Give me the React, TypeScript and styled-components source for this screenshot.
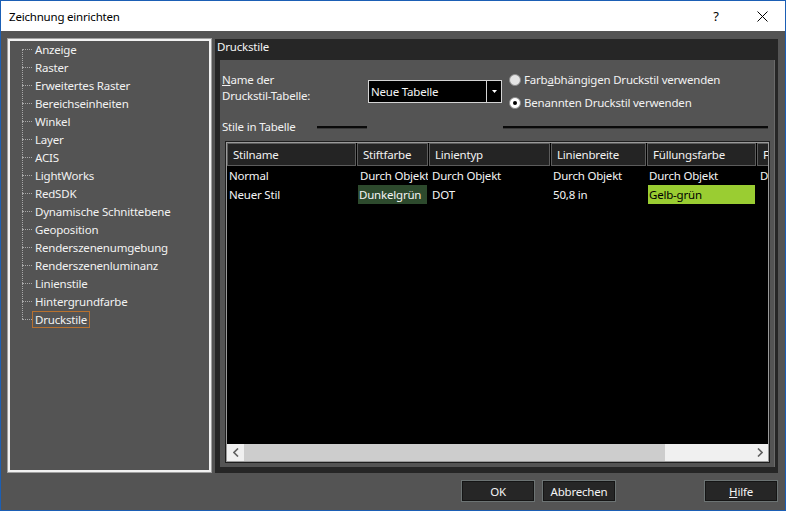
import React from 'react';
import styled, { createGlobalStyle } from 'styled-components';

const GlobalStyle = createGlobalStyle`
  html, body { margin: 0; padding: 0; background: #545454; }
  body { font-family: "Noto Sans", "Segoe UI", sans-serif; font-size: 11.5px; letter-spacing: -0.2px; }
  * { box-sizing: border-box; }
`;

const Window = styled.div`
  width: 786px;
  height: 511px;
  border: 1px solid #1b5fb5;
  display: flex;
  flex-direction: column;
  background: #545454;
  overflow: hidden;
`;

const TitleBar = styled.div`
  height: 30px;
  background: #ffffff;
  display: flex;
  align-items: center;
  flex-shrink: 0;
`;

const TitleText = styled.div`
  flex: 1;
  padding-left: 8px;
  color: #000;
`;

const CaptionButton = styled.div`
  width: 46px;
  height: 30px;
  display: flex;
  align-items: center;
  justify-content: center;
  color: #000;
  font-size: 13px;
`;

const Body = styled.div`
  flex: 1;
  display: flex;
  flex-direction: column;
  padding: 7px 7px 8px 6px;
`;

const MainRow = styled.div`
  display: flex;
  height: 435px;
  gap: 3px;
`;

const TreePanel = styled.div`
  width: 205px;
  height: 435px;
  border: 1px solid #a0a0a0;
  box-shadow: inset 0 0 0 2px #f2f2f2;
  padding: 1px 0 0 14px;
`;

const TreeList = styled.div`
  position: relative;
  &::before {
    content: '';
    position: absolute;
    left: 0;
    top: 9px;
    bottom: 9px;
    border-left: 1px dotted #a8a8a8;
  }
`;

const TreeItem = styled.div`
  height: 18px;
  display: flex;
  align-items: center;
  &::before {
    content: '';
    width: 10px;
    border-top: 1px dotted #a8a8a8;
  }
`;

const TreeLabel = styled.span<{ $selected?: boolean }>`
  color: #f2f2f2;
  border: 1px solid ${(p) => (p.$selected ? '#b8712f' : 'transparent')};
  padding: 0 2px 0 2px;
  line-height: 15px;
  white-space: nowrap;
`;

const RightPanel = styled.div`
  width: 563px;
  height: 434px;
  margin-top: 1px;
  background: #262626;
  display: flex;
  flex-direction: column;
`;

const PanelHeader = styled.div`
  height: 21px;
  padding: 0 0 0 2px;
  color: #f4f4f4;
  line-height: 15px;
  flex-shrink: 0;
`;

const PanelInner = styled.div`
  flex: 1;
  margin: 0 3px 6px 5px;
  background: #545454;
  border-right: 1px solid #6a6a6a;
  display: flex;
  flex-direction: column;
`;

const TopRow = styled.div`
  display: flex;
  align-items: flex-start;
  padding: 8px 0 0 2px;
`;

const NameLabel = styled.div`
  width: 146px;
  margin-top: 4px;
  color: #f2f2f2;
  line-height: 16px;
`;

const ComboBox = styled.div`
  margin-top: 12px;
  width: 134px;
  height: 23px;
  display: flex;
`;

const ComboField = styled.div`
  flex: 1;
  background: #000;
  border: 1px solid #d4d4d4;
  color: #f4f4f4;
  padding-left: 2px;
  display: flex;
  align-items: center;
`;

const ComboButton = styled.div`
  width: 15px;
  background: #000;
  border: 1px solid #d4d4d4;
  border-left: none;
  display: flex;
  align-items: center;
  justify-content: center;
`;

const RadioGroup = styled.div`
  margin-left: 7px;
  display: flex;
  flex-direction: column;
`;

const RadioRow = styled.div`
  height: 23px;
  display: flex;
  align-items: center;
  gap: 3px;
  color: #f2f2f2;
`;

const RadioCircle = styled.span<{ $checked?: boolean }>`
  width: 12px;
  height: 12px;
  border-radius: 50%;
  background: ${(p) => (p.$checked ? '#ffffff' : '#e4e4e4')};
  border: 1px solid #8a8a8a;
  display: flex;
  align-items: center;
  justify-content: center;
  &::after {
    content: '';
    width: 4px;
    height: 4px;
    border-radius: 50%;
    background: ${(p) => (p.$checked ? '#000' : 'transparent')};
  }
`;

const StileRow = styled.div`
  margin-top: 5px;
  height: 16px;
  display: flex;
  align-items: center;
  padding-left: 2px;
`;

const StileLabel = styled.div`
  width: 95px;
  color: #f2f2f2;
  line-height: 16px;
`;

const EtchLine = styled.div<{ $width?: number }>`
  height: 2px;
  background: #0a0a0a;
  border-bottom: 1px solid #3a3a3a;
  box-sizing: content-box;
  ${(p) => (p.$width ? `width: ${p.$width}px;` : 'flex: 1;')}
`;

const LineGap = styled.div`
  width: 136px;
`;

const LineEnd = styled.div`
  width: 6px;
`;

const TableFrame = styled.div`
  margin: 6px 4px 0 5px;
  height: 322px;
  border: 1px solid #1e1e1e;
`;

const TableInner = styled.div`
  height: 100%;
  border: 1px solid #9a9a9a;
  background: #000;
  display: flex;
  flex-direction: column;
  overflow: hidden;
`;

const HeaderRow = styled.div`
  display: flex;
  gap: 1px;
  height: 23px;
  flex-shrink: 0;
`;

const HeaderCell = styled.div<{ $w: number }>`
  width: ${(p) => p.$w}px;
  flex-shrink: 0;
  background: #242424;
  border: 1px solid #5c5c5c;
  color: #f2f2f2;
  padding-left: 5px;
  display: flex;
  align-items: center;
  white-space: nowrap;
  overflow: hidden;
`;

const Rows = styled.div`
  flex: 1;
`;

const DataRow = styled.div`
  display: flex;
  gap: 1px;
  height: 19px;
`;

const DataCell = styled.div<{ $w: number; $pad: number }>`
  width: ${(p) => p.$w}px;
  flex-shrink: 0;
  padding-left: ${(p) => p.$pad}px;
  color: #f4f4f4;
  white-space: nowrap;
  overflow: hidden;
  display: flex;
  align-items: center;
`;

const Swatch = styled.div<{ $bg: string; $fg: string }>`
  align-self: stretch;
  flex: 1;
  margin: 0 1px 0 0;
  background: ${(p) => p.$bg};
  color: ${(p) => p.$fg};
  padding-left: 1px;
  display: flex;
  align-items: center;
`;

const ScrollBar = styled.div`
  height: 17px;
  display: flex;
  flex-shrink: 0;
  background: #f0f0f0;
`;

const ScrollArrow = styled.div`
  width: 17px;
  display: flex;
  align-items: center;
  justify-content: center;
`;

const ScrollThumb = styled.div`
  width: 421px;
  background: #cdcdcd;
`;

const ScrollTrack = styled.div`
  flex: 1;
`;

const Footer = styled.div`
  margin-top: 7px;
  display: flex;
  justify-content: flex-end;
  gap: 7px;
`;

const Spacer = styled.div`
  width: 74px;
`;

const DialogButton = styled.div`
  width: 74px;
  height: 22px;
  background: #262626;
  border: 1px solid #6c7373;
  box-shadow: inset 0 0 0 1px #151515;
  color: #f4f4f4;
  display: flex;
  align-items: center;
  justify-content: center;
`;

const treeItems = [
  'Anzeige',
  'Raster',
  'Erweitertes Raster',
  'Bereichseinheiten',
  'Winkel',
  'Layer',
  'ACIS',
  'LightWorks',
  'RedSDK',
  'Dynamische Schnittebene',
  'Geoposition',
  'Renderszenenumgebung',
  'Renderszenenluminanz',
  'Linienstile',
  'Hintergrundfarbe',
  'Druckstile',
];

const columns = [
  { name: 'Stilname', w: 129 },
  { name: 'Stiftfarbe', w: 71 },
  { name: 'Linientyp', w: 121 },
  { name: 'Linienbreite', w: 95 },
  { name: 'Füllungsfarbe', w: 109 },
  { name: 'F', w: 40 },
];

const pads = [2, 3, 3, 2, 2, 3];

const Chevron = ({ dir }: { dir: 'left' | 'right' }) => (
  <svg width="6" height="9" viewBox="0 0 6 9">
    <polyline
      points={dir === 'left' ? '5,0.5 1,4.5 5,8.5' : '1,0.5 5,4.5 1,8.5'}
      fill="none"
      stroke="#606060"
      strokeWidth="1.6"
    />
  </svg>
);

export default function App() {
  return (
    <>
      <GlobalStyle />
      <Window>
        <TitleBar>
          <TitleText>Zeichnung einrichten</TitleText>
          <CaptionButton>?</CaptionButton>
          <CaptionButton>
            <svg width="11" height="11" viewBox="0 0 11 11">
              <line x1="0.5" y1="0.5" x2="10.5" y2="10.5" stroke="#000" strokeWidth="1" />
              <line x1="10.5" y1="0.5" x2="0.5" y2="10.5" stroke="#000" strokeWidth="1" />
            </svg>
          </CaptionButton>
        </TitleBar>
        <Body>
          <MainRow>
            <TreePanel>
              <TreeList>
                {treeItems.map((t) => (
                  <TreeItem key={t}>
                    <TreeLabel $selected={t === 'Druckstile'}>{t}</TreeLabel>
                  </TreeItem>
                ))}
              </TreeList>
            </TreePanel>
            <RightPanel>
              <PanelHeader>Druckstile</PanelHeader>
              <PanelInner>
                <TopRow>
                  <NameLabel>
                    <u>N</u>ame der
                    <br />
                    Druckstil-Tabelle:
                  </NameLabel>
                  <ComboBox>
                    <ComboField>Neue Tabelle</ComboField>
                    <ComboButton>
                      <svg width="5" height="3" viewBox="0 0 5 3">
                        <polygon points="0,0 5,0 2.5,3" fill="#fff" />
                      </svg>
                    </ComboButton>
                  </ComboBox>
                  <RadioGroup>
                    <RadioRow>
                      <RadioCircle />
                      <span>
                        Farb<u>a</u>bhängigen Druckstil verwenden
                      </span>
                    </RadioRow>
                    <RadioRow>
                      <RadioCircle $checked />
                      <span>Benannten Druckstil verwenden</span>
                    </RadioRow>
                  </RadioGroup>
                </TopRow>
                <StileRow>
                  <StileLabel>Stile in Tabelle</StileLabel>
                  <EtchLine $width={50} />
                  <LineGap />
                  <EtchLine />
                  <LineEnd />
                </StileRow>
                <TableFrame>
                  <TableInner>
                    <HeaderRow>
                      {columns.map((c) => (
                        <HeaderCell key={c.name} $w={c.w}>
                          {c.name}
                        </HeaderCell>
                      ))}
                    </HeaderRow>
                    <Rows>
                      <DataRow>
                        {['Normal', 'Durch Objekt', 'Durch Objekt', 'Durch Objekt', 'Durch Objekt', 'Durch Objekt'].map(
                          (v, i) => (
                            <DataCell key={i} $w={columns[i].w} $pad={pads[i]}>
                              {v}
                            </DataCell>
                          )
                        )}
                      </DataRow>
                      <DataRow>
                        <DataCell $w={columns[0].w} $pad={pads[0]}>
                          Neuer Stil
                        </DataCell>
                        <DataCell $w={columns[1].w} $pad={1}>
                          <Swatch $bg="#2d4a2d" $fg="#f4f4f4">
                            Dunkelgrün
                          </Swatch>
                        </DataCell>
                        <DataCell $w={columns[2].w} $pad={pads[2]}>
                          DOT
                        </DataCell>
                        <DataCell $w={columns[3].w} $pad={pads[3]}>
                          50,8 in
                        </DataCell>
                        <DataCell $w={columns[4].w} $pad={1}>
                          <Swatch $bg="#9acd32" $fg="#000">
                            Gelb-grün
                          </Swatch>
                        </DataCell>
                        <DataCell $w={columns[5].w} $pad={pads[5]} />
                      </DataRow>
                    </Rows>
                    <ScrollBar>
                      <ScrollArrow>
                        <Chevron dir="left" />
                      </ScrollArrow>
                      <ScrollThumb />
                      <ScrollTrack />
                      <ScrollArrow>
                        <Chevron dir="right" />
                      </ScrollArrow>
                    </ScrollBar>
                  </TableInner>
                </TableFrame>
              </PanelInner>
            </RightPanel>
          </MainRow>
          <Footer>
            <DialogButton>OK</DialogButton>
            <DialogButton>Abbrechen</DialogButton>
            <Spacer />
            <DialogButton>
              <span>
                <u>H</u>ilfe
              </span>
            </DialogButton>
          </Footer>
        </Body>
      </Window>
    </>
  );
}
